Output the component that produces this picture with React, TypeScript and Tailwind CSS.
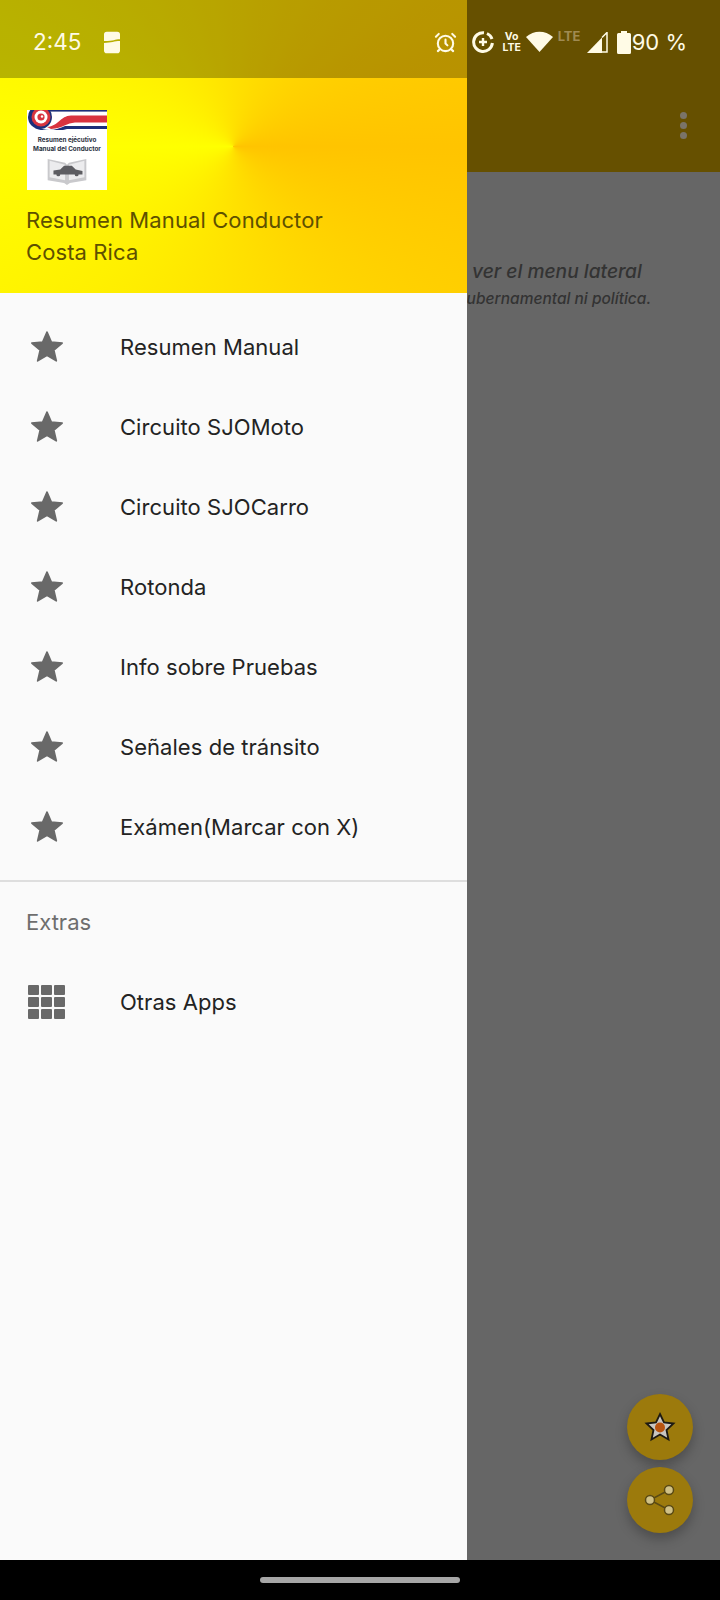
import { AlarmClock } from 'lucide-react';

const FONT = "font-['Inter','Liberation_Sans',sans-serif]";

const items = [
  'Resumen Manual',
  'Circuito SJOMoto',
  'Circuito SJOCarro',
  'Rotonda',
  'Info sobre Pruebas',
  'Señales de tránsito',
  'Exámen(Marcar con X)',
];

function Star() {
  return (
    <svg viewBox="0 0 24 24" className="w-10 h-10 shrink-0" fill="#696969" stroke="#696969" strokeWidth="1" strokeLinejoin="round">
      <path d="M12 16.9L17.6 20.3l-1.5-6.4 5-4.3-6.5-.55L12 3 9.4 9.05l-6.5.55 5 4.3-1.5 6.4z" />
    </svg>
  );
}

function Apps() {
  return (
    <div className="w-10 h-10 shrink-0 grid grid-cols-3 gap-[1.5px] py-[3px] pl-[1px] pr-[2px]">
      {Array.from({ length: 9 }).map((_, i) => (
        <div key={i} className="bg-[#696969] rounded-[1px]" />
      ))}
    </div>
  );
}

function Row({ icon, label }: { icon: React.ReactNode; label: string }) {
  return (
    <div className="h-20 flex items-center pl-[27px] gap-[53px]">
      {icon}
      <span className="text-[22px] tracking-[0.05px] text-[#232323]">{label}</span>
    </div>
  );
}

function Logo() {
  return (
    <div className="w-20 h-20 bg-white flex flex-col items-center overflow-hidden">
      <svg viewBox="0 0 80 20" className="w-20 h-5 shrink-0 blur-[0.4px]">
        <rect x="16" width="64" height="1.6" fill="#1c2f7a" />
        <path d="M20 17 C32 16 33 6 44 5.5 L80 5.5 L80 12.5 L48 12.5 C40 13 36 18 24 19 Z" fill="#d8333f" />
        <path d="M10 17 C20 22 30 20 38 16 L80 16 L80 19 L40 19 C30 22 16 22 8 18 Z" fill="#1c2f7a" />
        <circle cx="13" cy="7" r="12" fill="#1c2f7a" />
        <circle cx="14" cy="7" r="9.5" fill="#d8333f" />
        <circle cx="14" cy="7" r="6.5" fill="#ffffff" />
        <circle cx="14" cy="7" r="3.6" fill="#d8333f" />
        <circle cx="15" cy="6.5" r="1.2" fill="#ffffff" />
      </svg>
      <span className="mt-[6px] text-[6.3px] leading-[9px] font-bold text-[#2a3040] whitespace-nowrap">Resumen ejécutivo</span>
      <span className="text-[6.3px] leading-[9px] font-bold text-[#2a3040] whitespace-nowrap">Manual del Conductor</span>
      <svg viewBox="0 0 44 30" className="w-11 h-[29px] mt-[3px] blur-[0.3px]">
        <path d="M2 2 L20 6 L22 8 L24 6 L42 2 V24 L25 27 L22 29 L19 27 L2 24 Z" fill="#c9c9cc" />
        <path d="M4 4 L20 8 V24 L4 21 Z M40 4 L24 8 V24 L40 21 Z" fill="#ececee" />
        <path d="M8 14 L15 13 L19 9 H27 L31 13 L38 14.5 V18 H34 A2 2 0 0 1 30 18 H15 A2 2 0 0 1 11 18 H8 Z" fill="#5d5d62" />
      </svg>
    </div>
  );
}

function StatusBar() {
  return (
    <div className="absolute inset-x-0 top-0 h-[78px] pt-[6px] flex items-center pl-[33px] pr-[33px] text-[#fffbe6] bg-[linear-gradient(90deg,rgba(0,0,0,0.28)_467px,transparent_467px)]">
      <span className="text-[22.5px]">2:45</span>
      <svg viewBox="0 0 17 23" className="w-[16px] h-[23px] ml-[23px]" fill="currentColor">
        <path d="M3 0 H14 Q17 0 17 3 V8 C11 8 11 10 0 10 V3 Q0 0 3 0 Z M0 12 C8 12 11 10 17 10 V20 Q17 23 14 23 H3 Q0 23 0 20 Z" />
      </svg>
      <AlarmClock className="w-[23px] h-[23px] ml-auto" strokeWidth={2.2} />
      <svg viewBox="0 0 22 22" className="w-[22px] h-[22px] ml-[15px]" fill="none" stroke="currentColor">
        <path d="M12 1.7 A9.4 9.4 0 1 0 20.4 12" strokeWidth="3" />
        <path d="M15 2.5 A9.4 9.4 0 0 1 20 8" strokeWidth="3" />
        <path d="M11 7 V15 M7 11 H15" strokeWidth="2.4" />
      </svg>
      <div className="w-5 ml-[8px] flex flex-col items-center text-[10.5px] leading-[11px] font-bold">
        <span>Vo</span>
        <span>LTE</span>
      </div>
      <svg viewBox="0 0 27 22" className="w-[27px] h-[22px] ml-[4px]" fill="currentColor">
        <path d="M13.5 21 L0 6 C8 -1 19 -1 27 6 Z" />
      </svg>
      <span className="w-[26px] ml-[5px] mb-[13px] text-[13px] leading-[14px] font-bold text-[#a08b52]">LTE</span>
      <svg viewBox="0 0 21 21" className="w-[21px] h-[21px] ml-[3px]" fill="none">
        <path d="M0 21 L15 21 L15 5.5 Z" fill="currentColor" />
        <path d="M15 5.5 L20 0.5 V20 H15" stroke="currentColor" strokeWidth="1.5" />
      </svg>
      <svg viewBox="0 0 14 23" className="w-[14px] h-[23px] ml-[9px]" fill="currentColor">
        <path d="M4 0 H10 V2 H12.5 Q14 2 14 3.5 V21.5 Q14 23 12.5 23 H1.5 Q0 23 0 21.5 V3.5 Q0 2 1.5 2 H4 Z" />
      </svg>
      <span className="ml-[1px] text-[22px] whitespace-nowrap">90 %</span>
    </div>
  );
}

function Fab({ children }: { children: React.ReactNode }) {
  return (
    <div className="w-[66px] h-[66px] rounded-full bg-[#9c7a0c] flex items-center justify-center shadow-[0_6px_12px_rgba(0,0,0,0.25)]">
      {children}
    </div>
  );
}

export default function App() {
  return (
    <div className={`relative w-[720px] h-[1600px] flex flex-col overflow-hidden ${FONT}`}>
      <div className="flex-1 flex min-h-0">
        {/* drawer */}
        <div className="w-[467px] shrink-0 flex flex-col bg-[#fafafa]">
          <div className="h-[293px] pt-[110px] pl-[27px] bg-[conic-gradient(from_90deg_at_50%_50%,#ffc400,#ffff00,#ffc400)]">
            <Logo />
            <div className="mt-[14px] -ml-[1px] text-[22px] leading-[32px] tracking-[0.1px] text-[#5e5000]">
              <div>Resumen Manual Conductor</div>
              <div>Costa Rica</div>
            </div>
          </div>
          <div className="pt-[14px] pb-[13px]">
            {items.map((label) => (
              <Row key={label} icon={<Star />} label={label} />
            ))}
          </div>
          <div className="h-[2px] bg-[#dedede]" />
          <div className="h-[80px] flex items-center pl-[26px] text-[22px] text-[#6e6e6e]">Extras</div>
          <Row icon={<Apps />} label="Otras Apps" />
        </div>

        {/* dimmed page behind the drawer */}
        <div className="flex-1 min-w-0 flex flex-col bg-[#666666] overflow-hidden">
          <div className="h-[172px] shrink-0 bg-[#665000] pt-[78px] pr-[33px] flex flex-col items-end justify-center gap-[3px]">
            <div className="w-[7px] h-[7px] rounded-full bg-[#7a7468]" />
            <div className="w-[7px] h-[7px] rounded-full bg-[#7a7468]" />
            <div className="w-[7px] h-[7px] rounded-full bg-[#7a7468]" />
          </div>
          <div className="mt-[84px] pl-[5px] text-[19.2px] leading-[30px] italic font-medium text-[#333333] whitespace-nowrap">
            ver el menu lateral
          </div>
          <div className="-ml-[10px] text-[15.5px] leading-[26px] italic font-medium text-[#333333] whitespace-nowrap">
            gubernamental ni política.
          </div>
          <div className="mt-auto pr-[27px] pb-[27px] flex flex-col items-end gap-[7px]">
            <Fab>
              <svg viewBox="0 0 32 32" className="w-8 h-8 blur-[0.4px]">
                <path d="M16 3 L20 11.5 L29.5 12.5 L22.5 19 L24.5 28.5 L16 23.5 L7.5 28.5 L9.5 19 L2.5 12.5 L12 11.5 Z" fill="#c9c6c0" stroke="#1d1a12" strokeWidth="1.8" />
                <circle cx="16" cy="16.5" r="5" fill="#b9540f" />
              </svg>
            </Fab>
            <Fab>
              <svg viewBox="0 0 32 32" className="w-8 h-8 blur-[0.4px]" stroke="#5a4a14" strokeWidth="1.5" fill="#d0c186">
                <path d="M25 6 L6 16 L25 26" fill="none" />
                <circle cx="25" cy="6" r="4.5" />
                <circle cx="6" cy="16" r="4.5" />
                <circle cx="25" cy="26" r="4.5" />
              </svg>
            </Fab>
          </div>
        </div>
      </div>

      {/* navigation bar */}
      <div className="h-10 shrink-0 bg-black flex items-center justify-center">
        <div className="w-[200px] h-[6px] rounded-full bg-[#a6a6a6]" />
      </div>

      <StatusBar />
    </div>
  );
}
